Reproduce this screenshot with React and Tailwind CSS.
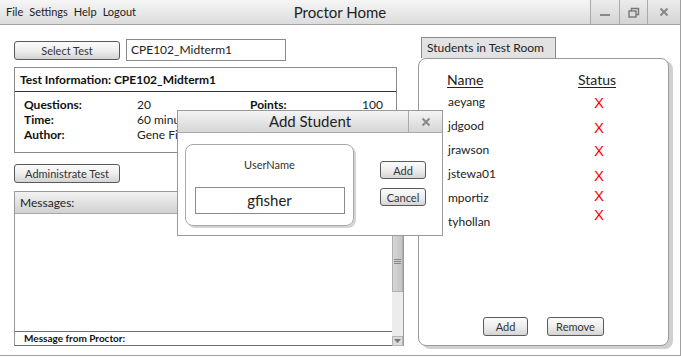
import React from 'react';

const btn =
  'flex items-center justify-center rounded-[3px] border border-[#5a5a5a] bg-gradient-to-b from-[#fbfbfb] via-[#eeeeee] to-[#d4d4d4] text-[11px] text-[#333] leading-none';

// status marks in the reference sit a little off the row baseline
const students = [
  { name: 'aeyang', shift: 'translate-y-0' },
  { name: 'jdgood', shift: 'translate-y-[1px]' },
  { name: 'jrawson', shift: 'translate-y-0' },
  { name: 'jstewa01', shift: 'translate-y-[1px]' },
  { name: 'mportiz', shift: '-translate-y-[3px]' },
  { name: 'tyhollan', shift: '-translate-y-[8px]' },
];

function TitleBar() {
  return (
    <div className="grid grid-cols-[1fr_auto_1fr] h-[25px] border-b border-[#a2a2a2] bg-gradient-to-b from-[#f6f6f6] to-[#dcdcdc]">
      <div className="flex items-center gap-[6px] pl-[6px] text-[11px] text-[#222]">
        <span>File</span>
        <span>Settings</span>
        <span>Help</span>
        <span>Logout</span>
      </div>
      <div className="flex items-center text-[15px] text-[#222]">Proctor Home</div>
      <div className="flex justify-end">
        <div className="w-[29px] flex items-center justify-center border-l border-[#aaa] bg-gradient-to-b from-[#ececec] to-[#d4d4d4]">
          <div className="w-[10px] h-[2px] bg-[#888] mt-[6px]" />
        </div>
        <div className="w-[28px] flex items-center justify-center border-l border-[#aaa] bg-gradient-to-b from-[#ececec] to-[#d4d4d4]">
          <svg width="12" height="11" viewBox="0 0 12 11" fill="none" stroke="#777" strokeWidth="1.4">
            <rect x="1" y="4" width="7" height="6" />
            <path d="M3.5 4V1.5H10.5V7.5H8" />
          </svg>
        </div>
        <div className="w-[33px] flex items-center justify-center border-l border-[#aaa] bg-gradient-to-b from-[#ececec] to-[#d4d4d4]">
          <svg width="10" height="10" viewBox="0 0 10 10" stroke="#888" strokeWidth="2">
            <path d="M1.5 1.5L8.5 8.5M8.5 1.5L1.5 8.5" />
          </svg>
        </div>
      </div>
    </div>
  );
}

function LeftColumn() {
  return (
    <div className="w-[390px] ml-[14px] pt-[14px] flex flex-col">
      {/* Select test row */}
      <div className="flex items-center gap-[6px]">
        <button className={`${btn} w-[106px] h-[19px]`}>Select Test</button>
        <div className="w-[160px] h-[22px] border border-[#8a8a8a] flex items-center pl-[4px] text-[12px] text-[#222]">
          CPE102_Midterm1
        </div>
      </div>

      {/* Test information */}
      <div className="mt-[6px] w-[383px] h-[86px] border border-[#8a8a8a] flex flex-col">
        <div className="h-[24px] shrink-0 border-b border-[#333] flex items-center pl-[5px] text-[12px] font-bold text-[#111]">
          Test Information: CPE102_Midterm1
        </div>
        <div className="grid grid-cols-[113px_113px_1fr_auto] pl-[9px] pr-[13px] pt-[5px] text-[12px] leading-[15px] text-[#222]">
          <span className="font-bold text-[#111]">Questions:</span>
          <span>20</span>
          <span className="font-bold text-[#111]">Points:</span>
          <span>100</span>
          <span className="font-bold text-[#111]">Time:</span>
          <span className="col-span-3">60 minutes</span>
          <span className="font-bold text-[#111]">Author:</span>
          <span className="col-span-3">Gene Fisher</span>
        </div>
      </div>

      <button className={`${btn} mt-[11px] w-[106px] h-[19px]`}>Administrate Test</button>

      {/* Messages */}
      <div className="mt-[8px] w-[390px] h-[155px] border-l border-t border-r border-[#9a9a9a] flex flex-col">
        <div className="h-[22px] shrink-0 border-b border-[#aaa] bg-gradient-to-b from-[#f2f2f2] to-[#d2d2d2] flex items-center pl-[5px] text-[12px] text-[#222]">
          Messages:
        </div>
        <div className="flex-1 flex">
          <div className="flex-1 flex flex-col">
            <div className="flex-1" />
            <div className="h-[15px] border-t border-b border-[#707070] flex items-center pl-[9px] text-[10px] font-bold text-[#111]">
              Message from Proctor:
            </div>
          </div>
          <div className="w-[11px] bg-[#ececec] flex flex-col">
            <div className="mt-[16px] h-[62px] border border-[#b0b0b0] bg-gradient-to-r from-[#d6d6d6] to-[#c4c4c4] flex flex-col items-center justify-center gap-[1px]">
              <div className="w-[7px] h-px bg-[#888]" />
              <div className="w-[7px] h-px bg-[#888]" />
              <div className="w-[7px] h-px bg-[#888]" />
            </div>
            <div className="flex-1" />
            <div className="h-[10px] bg-[#dcdcdc] border border-[#b5b5b5] flex items-center justify-center">
              <svg width="7" height="4" viewBox="0 0 7 4">
                <path d="M0 0H7L3.5 4Z" fill="#777" />
              </svg>
            </div>
          </div>
        </div>
      </div>
    </div>
  );
}

function RightColumn() {
  return (
    <div className="ml-[14px] pt-[12px] flex flex-col">
      <div className="ml-[3px] w-[135px] h-[21px] border border-b-0 border-[#8a8a8a] bg-[#e2e2e2] flex items-center pl-[5px] text-[12px] text-[#222]">
        Students in Test Room
      </div>
      <div className="w-[251px] h-[288px] border border-[#9a9a9a] rounded-[8px] shadow-[4px_3px_0_#d0d0d0] bg-white flex flex-col pt-[11px] pb-[9px]">
        <div className="grid grid-cols-[131px_42px] pl-[28px] text-[#222]">
          <span className="h-[20px] text-[14px] leading-[20px] underline underline-offset-2">Name</span>
          <span className="h-[20px] text-[14px] leading-[20px] underline underline-offset-2">Status</span>
          {students.map((s) => (
            <React.Fragment key={s.name}>
              <span className="h-[24px] text-[12px] leading-[24px] pl-px">{s.name}</span>
              <span className={`h-[24px] flex items-center justify-center ${s.shift}`}>
                <span className="text-[15px] leading-none text-[#ff0000] font-['Liberation_Sans',sans-serif]">X</span>
              </span>
            </React.Fragment>
          ))}
        </div>
        <div className="flex-1" />
        <div className="flex justify-center gap-[19px]">
          <button className={`${btn} w-[45px] h-[19px]`}>Add</button>
          <button className={`${btn} w-[57px] h-[19px]`}>Remove</button>
        </div>
      </div>
    </div>
  );
}

function AddStudentDialog() {
  return (
    <div className="absolute left-[177px] top-[110px] w-[266px] h-[126px] border border-[#9a9a9a] bg-white flex flex-col">
      <div className="h-[22px] shrink-0 flex border-b border-[#aaa] bg-gradient-to-b from-[#f4f4f4] to-[#d6d6d6]">
        <div className="flex-1 flex items-center justify-center text-[15px] text-[#222] pl-[34px]">Add Student</div>
        <div className="w-[34px] border-l border-[#aaa] flex items-center justify-center">
          <svg width="10" height="10" viewBox="0 0 10 10" stroke="#888" strokeWidth="2">
            <path d="M1.5 1.5L8.5 8.5M8.5 1.5L1.5 8.5" />
          </svg>
        </div>
      </div>
      <div className="flex pl-[7px] pt-[11px]">
        <div className="w-[169px] h-[82px] border border-[#a8a8a8] rounded-[8px] shadow-[2px_2px_0_#d4d4d4] flex flex-col items-center pt-[13px]">
          <span className="text-[11px] leading-[14px] text-[#333]">UserName</span>
          <div className="mt-[15px] w-[150px] h-[27px] border border-[#8a8a8a] flex items-center justify-center text-[15px] text-[#222]">
            gfisher
          </div>
        </div>
        <div className="ml-[26px] pt-[17px] flex flex-col gap-[9px]">
          <button className={`${btn} w-[46px] h-[18px]`}>Add</button>
          <button className={`${btn} w-[46px] h-[18px]`}>Cancel</button>
        </div>
      </div>
    </div>
  );
}

export default function App() {
  return (
    <div className="w-[681px] h-[358px] bg-white overflow-hidden font-['Lato',sans-serif]">
      <div className="relative w-[681px] h-[356px] border-r border-b border-[#a0a0a0] flex flex-col">
        <TitleBar />
        <div className="flex flex-1">
          <LeftColumn />
          <RightColumn />
        </div>
        <AddStudentDialog />
      </div>
    </div>
  );
}
